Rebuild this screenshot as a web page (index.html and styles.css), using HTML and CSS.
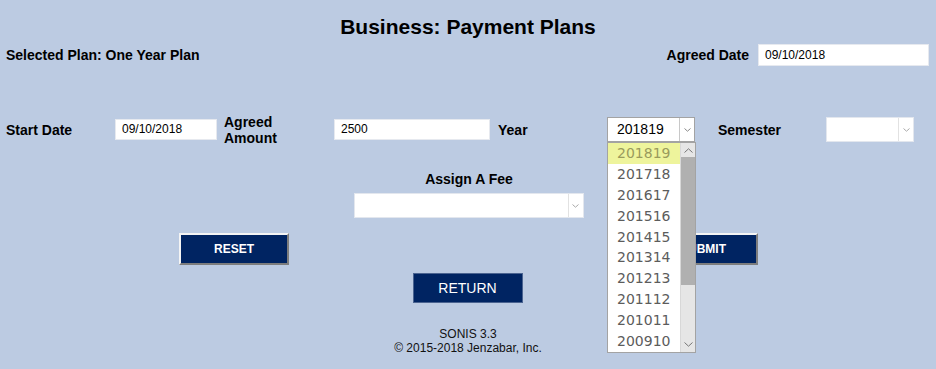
FILE: index.html
```html
<!DOCTYPE html>
<html lang="en">
  <head>
    <meta charset="UTF-8" />
    <title>Business: Payment Plans</title>
    <link rel="stylesheet" href="styles.css">
  </head>

  <body>
    <h1 class="title">Business: Payment Plans</h1>

    <div class="top_row">
      <span class="label">Selected Plan: One Year Plan</span>
      <div class="agreed_date">
        <span class="label">Agreed Date</span>
        <div class="input input_wide">09/10/2018</div>
      </div>
    </div>

    <div class="field_row">
      <span class="label col_start">Start Date</span>
      <div class="input input_start">09/10/2018</div>
      <span class="label col_amount">Agreed<br />Amount</span>
      <div class="input input_amount">2500</div>
      <span class="label col_year">Year</span>
      <div class="year_wrap">
        <div class="select select_small open">
          <span class="value">201819</span>
          <span class="arrow">
            <svg width="7" height="4" viewBox="0 0 7 4"><path d="M0.5 0.5 L3.5 3.2 L6.5 0.5" fill="none" stroke="#888" stroke-width="1"/></svg>
          </span>
        </div>
        <div class="dropdown">
          <ul class="options">
            <li class="active">201819</li>
            <li>201718</li>
            <li>201617</li>
            <li>201516</li>
            <li>201415</li>
            <li>201314</li>
            <li>201213</li>
            <li>201112</li>
            <li>201011</li>
            <li>200910</li>
          </ul>
          <div class="scrollbar">
            <svg class="up" width="9" height="5" viewBox="0 0 9 5"><path d="M0.5 4.5 L4.5 0.8 L8.5 4.5" fill="none" stroke="#777" stroke-width="1"/></svg>
            <div class="thumb"></div>
            <svg class="down" width="9" height="5" viewBox="0 0 9 5"><path d="M0.5 0.5 L4.5 4.2 L8.5 0.5" fill="none" stroke="#777" stroke-width="1"/></svg>
          </div>
        </div>
      </div>
      <span class="label col_semester">Semester</span>
      <div class="select select_small">
        <span class="value"></span>
        <span class="arrow">
          <svg width="7" height="4" viewBox="0 0 7 4"><path d="M0.5 0.5 L3.5 3.2 L6.5 0.5" fill="none" stroke="#aaa" stroke-width="1"/></svg>
        </span>
      </div>
    </div>

    <div class="fee">
      <span class="label">Assign A Fee</span>
      <div class="select select_fee">
        <span class="value"></span>
        <span class="arrow">
          <svg width="7" height="4" viewBox="0 0 7 4"><path d="M0.5 0.5 L3.5 3.2 L6.5 0.5" fill="none" stroke="#aaa" stroke-width="1"/></svg>
        </span>
      </div>
    </div>

    <div class="buttons">
      <button class="btn btn_raised">RESET</button>
      <button class="btn btn_raised">SUBMIT</button>
    </div>

    <div class="return_row">
      <button class="btn btn_flat">RETURN</button>
    </div>

    <footer class="footer">
      <p>SONIS 3.3</p>
      <p>&copy; 2015-2018 Jenzabar, Inc.</p>
    </footer>
  </body>
</html>
```

FILE: styles.css
```css
* {
  padding: 0;
  margin: 0;
  box-sizing: border-box;
}

body {
  width: 936px;
  height: 369px;
  overflow: hidden;
  background: #bccbe2;
  font-family: "Liberation Sans", Arial, sans-serif;
  color: #000;
}

.title {
  text-align: center;
  font-size: 21px;
  font-weight: 700;
  line-height: 24px;
  padding-top: 15px;
}

.label {
  font-size: 14px;
  font-weight: 700;
  line-height: 16px;
}

.input {
  background: #fff;
  border: 1px solid #e6e9ef;
  font-size: 12px;
  line-height: 19px;
  padding-left: 6px;
}

.top_row {
  display: flex;
  justify-content: space-between;
  align-items: center;
  margin-top: 5px;
  padding: 0 7px 0 6px;
  height: 22px;
}

.agreed_date {
  display: flex;
  align-items: center;
  gap: 9px;
}

.input_wide {
  width: 171px;
  height: 22px;
  line-height: 20px;
}

.field_row {
  display: flex;
  align-items: center;
  margin-top: 51px;
  padding-left: 6px;
  height: 25px;
}

.col_start {
  width: 109px;
}

.input_start {
  width: 102px;
  height: 21px;
}

.col_amount {
  width: 110px;
  margin-left: 7px;
}

.input_amount {
  width: 156px;
  height: 21px;
}

.col_year {
  width: 109px;
  margin-left: 8px;
}

.col_semester {
  width: 108px;
  margin-left: 23px;
}

.select {
  display: flex;
  background: #fff;
  border: 1px solid #e3e7ee;
  height: 25px;
}

.select .value {
  flex: 1;
  font-size: 14px;
  line-height: 23px;
  padding-left: 9px;
}

.select .arrow {
  width: 15px;
  border-left: 1px solid #e2e2e2;
  display: flex;
  align-items: center;
  justify-content: center;
}

.select_small {
  width: 88px;
}

.select.open {
  border-color: #a3a3a3;
}

.select.open .arrow {
  border-left-color: #c8c8c8;
}

.year_wrap {
  position: relative;
}

.dropdown {
  position: absolute;
  top: 100%;
  left: 0;
  width: 89px;
  height: 211px;
  background: #fff;
  border: 1px solid #a3a3a3;
  display: flex;
  z-index: 2;
}

.options {
  list-style: none;
  flex: 1;
}

.options li {
  height: 20.9px;
  line-height: 21px;
  font-family: "DejaVu Sans", Verdana, sans-serif;
  font-size: 14px;
  color: #5c5c5c;
  padding-left: 9px;
}

.options li.active {
  background: #eef49c;
  color: #9a9b5c;
}

.scrollbar {
  width: 15px;
  background: #e6e6e6;
  border-left: 1px solid #d8d8d8;
  display: flex;
  flex-direction: column;
  align-items: center;
}

.scrollbar .up {
  margin: 5px 0 4px;
}

.scrollbar .thumb {
  width: 14px;
  height: 128px;
  background: #b0b0b0;
}

.scrollbar .down {
  margin-top: auto;
  margin-bottom: 5px;
}

.fee {
  display: flex;
  flex-direction: column;
  align-items: center;
  margin-top: 29px;
  gap: 6px;
}

.fee .label {
  padding-left: 2px;
}

.select_fee {
  width: 230px;
  margin-left: 1px;
}

.buttons {
  display: flex;
  justify-content: space-between;
  margin-top: 15px;
  padding: 0 178px 0 179px;
}

.btn {
  background: #002462;
  color: #fff;
  font-family: "Liberation Sans", Arial, sans-serif;
  width: 110px;
}

.btn_raised {
  height: 32px;
  font-size: 12px;
  font-weight: 700;
  border: 2px solid;
  border-color: #f4f4f4 #7d7d7d #7d7d7d #f4f4f4;
}

.return_row {
  display: flex;
  justify-content: center;
  margin-top: 8px;
  padding-right: 1px;
}

.btn_flat {
  height: 30px;
  font-size: 14px;
  border: 1px solid #4a6390;
}

.footer {
  text-align: center;
  font-size: 12px;
  line-height: 14px;
  margin-top: 24px;
  color: #111;
}
```
